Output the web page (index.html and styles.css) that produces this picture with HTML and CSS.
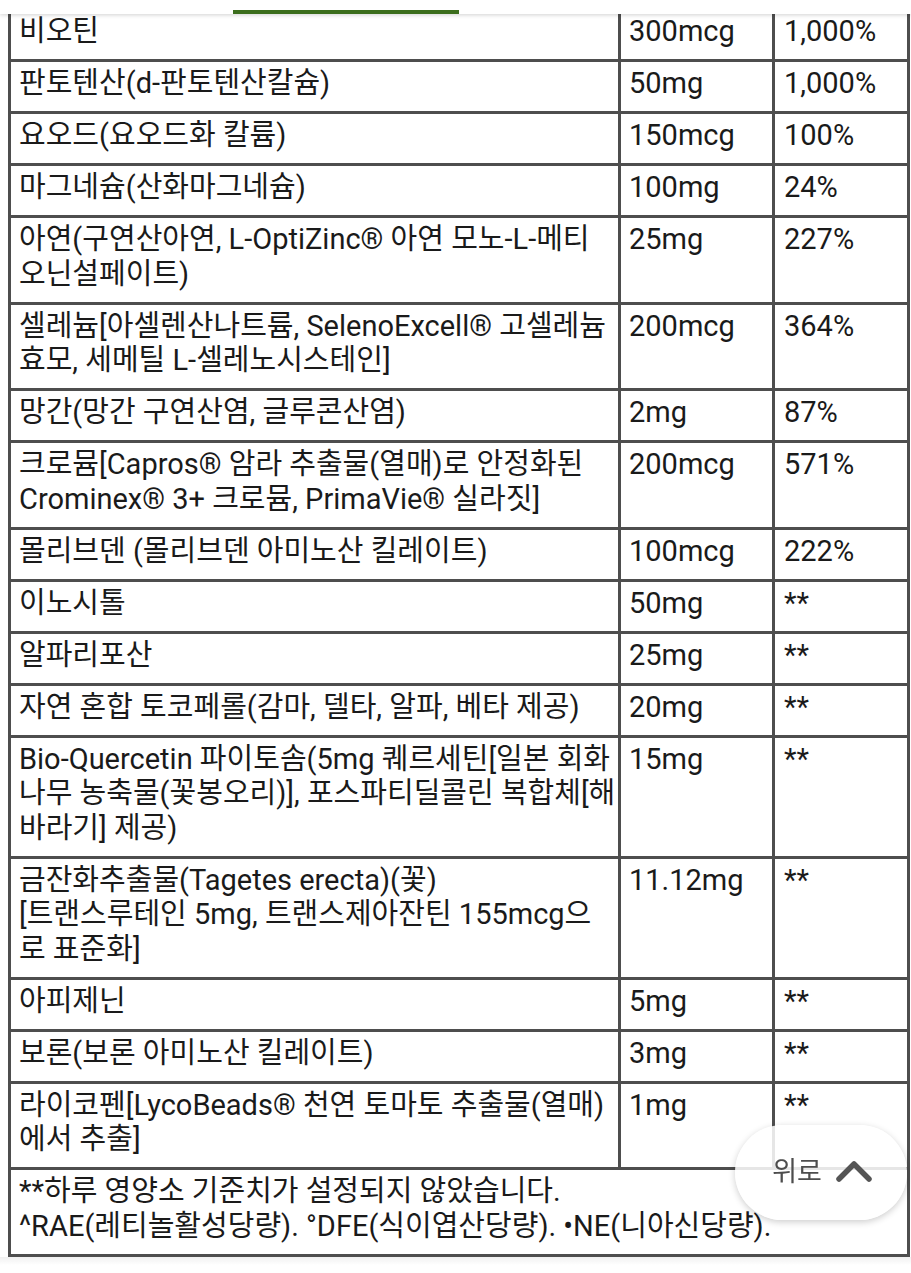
FILE: index.html
```html
<!DOCTYPE html>
<html lang="ko">
<head>
<meta charset="utf-8">
<title>영양 성분표</title>
<link rel="stylesheet" href="styles.css">
</head>
<body>
<header class="topbar"><div class="tab-indicator"></div></header>
<table class="facts">
  <tbody>
    <tr><td class="c-name">비오틴</td><td class="c-amt">300mcg</td><td class="c-dv">1,000%</td></tr>
    <tr><td>판토텐산(d-판토텐산칼슘)</td><td>50mg</td><td>1,000%</td></tr>
    <tr><td>요오드(요오드화 칼륨)</td><td>150mcg</td><td>100%</td></tr>
    <tr><td>마그네슘(산화마그네슘)</td><td>100mg</td><td>24%</td></tr>
    <tr><td>아연(구연산아연, L-OptiZinc® 아연 모노-L-메티<br>오닌설페이트)</td><td>25mg</td><td>227%</td></tr>
    <tr><td>셀레늄[아셀렌산나트륨, SelenoExcell® 고셀레늄<br>효모, 세메틸 L-셀레노시스테인]</td><td>200mcg</td><td>364%</td></tr>
    <tr><td>망간(망간 구연산염, 글루콘산염)</td><td>2mg</td><td>87%</td></tr>
    <tr><td>크로뮴[Capros® 암라 추출물(열매)로 안정화된<br>Crominex® 3+ 크로뮴, PrimaVie® 실라짓]</td><td>200mcg</td><td>571%</td></tr>
    <tr><td>몰리브덴 (몰리브덴 아미노산 킬레이트)</td><td>100mcg</td><td>222%</td></tr>
    <tr><td>이노시톨</td><td>50mg</td><td>**</td></tr>
    <tr><td>알파리포산</td><td>25mg</td><td>**</td></tr>
    <tr><td>자연 혼합 토코페롤(감마, 델타, 알파, 베타 제공)</td><td>20mg</td><td>**</td></tr>
    <tr><td>Bio-Quercetin 파이토솜(5mg 퀘르세틴[일본 회화<br>나무 농축물(꽃봉오리)], 포스파티딜콜린 복합체[해<br>바라기] 제공)</td><td>15mg</td><td>**</td></tr>
    <tr><td>금잔화추출물(Tagetes erecta)(꽃)<br>[트랜스루테인 5mg, 트랜스제아잔틴 155mcg으<br>로 표준화]</td><td>11.12mg</td><td>**</td></tr>
    <tr><td>아피제닌</td><td>5mg</td><td>**</td></tr>
    <tr><td>보론(보론 아미노산 킬레이트)</td><td>3mg</td><td>**</td></tr>
    <tr><td>라이코펜[LycoBeads® 천연 토마토 추출물(열매)<br>에서 추출]</td><td>1mg</td><td>**</td></tr>
    <tr><td class="note" colspan="3">**하루 영양소 기준치가 설정되지 않았습니다.<br>^RAE(레티놀활성당량). °DFE(식이엽산당량). •NE(니아신당량).</td></tr>
  </tbody>
</table>
<div class="page-foot"></div>
<button class="to-top" type="button">
  <span class="to-top-label">위로</span>
  <svg class="to-top-icon" width="36" height="22" viewBox="0 0 36 22" aria-hidden="true">
    <path d="M3 19 L18 4 L33 19" fill="none" stroke="#555" stroke-width="5.5" stroke-linecap="round" stroke-linejoin="round"/>
  </svg>
</button>
</body>
</html>
```
FILE: styles.css
```css
html, body {
  margin: 0;
  padding: 0;
  background: #ffffff;
}

body {
  font-family: Roboto, "Noto Sans CJK KR", "Noto Sans", sans-serif;
  color: #1a1a1a;
  width: 911px;
  height: 1273px;
  overflow: hidden;
}

.topbar {
  position: fixed;
  top: 0;
  left: 0;
  right: 0;
  height: 14px;
  background: #ffffff;
  box-shadow: 0 1px 4px rgba(0, 0, 0, 0.18);
  z-index: 5;
  display: flex;
  align-items: flex-end;
}

.tab-indicator {
  margin-left: 233px;
  width: 226px;
  height: 4px;
  background: #3c6e1d;
}

.facts {
  margin: 7px 0 0 8px;
  width: 902px;
  table-layout: fixed;
  border-collapse: separate;
  border-spacing: 0;
  border-left: 3px solid #4e4e4e;
  border-top: 3px solid #4e4e4e;
  font-size: 29px;
  line-height: 34.5px;
}

.facts td {
  box-sizing: border-box;
  vertical-align: top;
  white-space: nowrap;
  padding: 4px 4px 10.5px 8px;
  border-right: 3px solid #4e4e4e;
  border-bottom: 3px solid #4e4e4e;
  overflow: visible;
}

.facts .c-name { width: 610px; }
.facts .c-amt { width: 154px; }
.facts .c-dv { width: 135px; }
.facts td:nth-child(3) { padding-left: 9px; }

.facts .note {
  padding-left: 8px;
}

.page-foot {
  height: 8px;
  background: linear-gradient(to bottom, rgba(0, 0, 0, 0.06), rgba(0, 0, 0, 0));
}

.to-top {
  position: fixed;
  left: 735px;
  top: 1125px;
  width: 172px;
  height: 95px;
  border: none;
  border-radius: 48px;
  background: rgba(255, 255, 255, 0.86);
  box-shadow: 0 2px 7px rgba(0, 0, 0, 0.2);
  display: flex;
  align-items: center;
  justify-content: center;
  gap: 14px;
  padding: 0 0 0 2px;
  font-family: Roboto, "Noto Sans CJK KR", sans-serif;
  font-size: 27px;
  color: #4d4d4d;
  z-index: 6;
}

.to-top-label {
  line-height: 1;
}

.to-top-icon {
  display: block;
  margin-top: -4px;
}
```
